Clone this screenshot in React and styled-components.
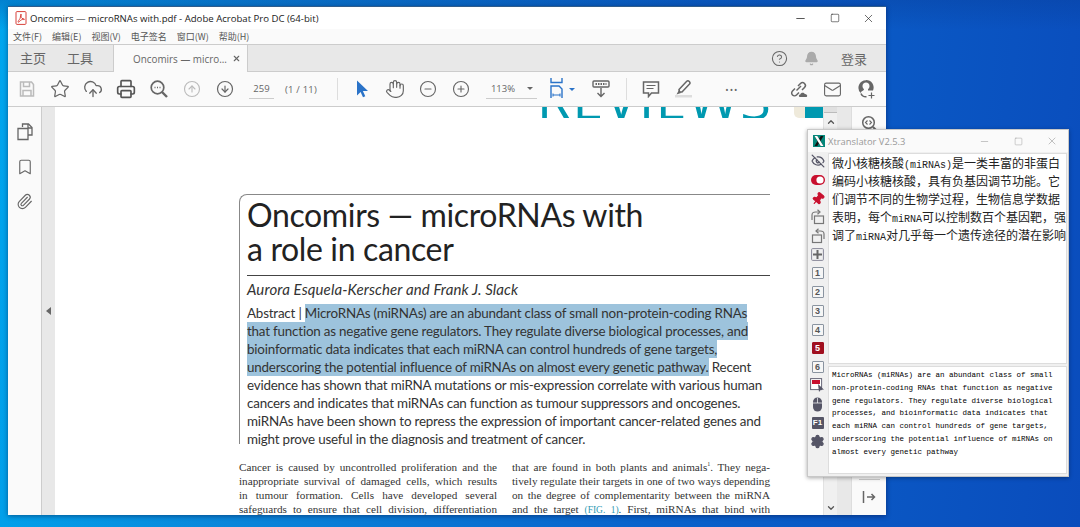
import React from 'react';
import styled, { createGlobalStyle } from 'styled-components';
import {
  Star, CloudUpload, Printer, CircleArrowUp, CircleArrowDown, Hand, CircleMinus, CirclePlus,
  Bookmark, Paperclip, CircleHelp, Bell, Mail, Minus, Square, X, EyeOff, Pin, Settings, ChevronUp, ChevronDown,
} from 'lucide-react';

const GlobalStyle = createGlobalStyle`
  html, body {
    margin: 0;
    padding: 0;
    width: 1080px;
    height: 527px;
    overflow: hidden;
  }
  * { box-sizing: border-box; }
`;

const UI_FONT = `"Open Sans", "Noto Sans CJK SC", sans-serif`;
const CJK_FONT = `"Noto Sans CJK SC", "Noto Sans", sans-serif`;
const PAPER_FONT = `Lato, "Open Sans", sans-serif`;

const menus = ['文件(F)', '编辑(E)', '视图(V)', '电子签名', '窗口(W)', '帮助(H)'];

const abstractLines = [
  { before: 'Abstract | ', mark: 'MicroRNAs (miRNAs) are an abundant class of small non-protein-coding RNAs' },
  { mark: 'that function as negative gene regulators. They regulate diverse biological processes, and' },
  { mark: 'bioinformatic data indicates that each miRNA can control hundreds of gene targets,' },
  { mark: 'underscoring the potential influence of miRNAs on almost every genetic pathway.', after: ' Recent' },
  { after: 'evidence has shown that miRNA mutations or mis-expression correlate with various human' },
  { after: 'cancers and indicates that miRNAs can function as tumour suppressors and oncogenes.' },
  { after: 'miRNAs have been shown to repress the expression of important cancer-related genes and' },
  { after: 'might prove useful in the diagnosis and treatment of cancer.' },
];

const leftColumn = [
  'Cancer is caused by uncontrolled proliferation and the',
  'inappropriate survival of damaged cells, which results',
  'in tumour formation. Cells have developed several',
  'safeguards to ensure that cell division, differentiation',
];

const zhLines = [
  ['微小核糖核酸', '(miRNAs)', '是一类丰富的非蛋白'],
  ['编码小核糖核酸，具有负基因调节功能。它'],
  ['们调节不同的生物学过程，生物信息学数据'],
  ['表明，每个', 'miRNA', '可以控制数百个基因靶，强'],
  ['调了', 'miRNA', '对几乎每一个遗传途径的潜在影响'],
];

const enLines = [
  'MicroRNAs (miRNAs) are an abundant class of small',
  'non-protein-coding RNAs that function as negative',
  'gene regulators. They regulate diverse biological',
  'processes, and bioinformatic data indicates that',
  'each miRNA can control hundreds of gene targets,',
  'underscoring the potential influence of miRNAs on',
  'almost every genetic pathway',
];

function PdfIcon() {
  return (
    <svg width="12" height="14" viewBox="0 0 12 14">
      <path d="M1 1.5C1 1 1.4.6 2 .6h8c.6 0 1 .4 1 .9v11c0 .5-.4.9-1 .9H2c-.6 0-1-.4-1-.9z" fill="#fff" stroke="#d8413a" />
      <path d="M6 3c-.7 0-.2 3-1 4.5S2.5 10.8 3.3 11.2 5 9.5 6.5 8.8s3 .2 3-.5S6.8 8 6.3 6.5 6.6 3 6 3z" fill="none" stroke="#d8413a" strokeWidth="1" />
    </svg>
  );
}

function SaveIcon() {
  return (
    <svg width="18" height="18" viewBox="0 0 18 18" fill="none" stroke="#bbb" strokeWidth="1.5">
      <path d="M2.5 2h11l2 2.5V16h-13z" />
      <path d="M5.5 2v4.500h6V2M5 16v-5.500h8V16" />
    </svg>
  );
}

function FindIcon() {
  return (
    <svg width="20" height="20" viewBox="0 0 20 20" fill="none" stroke="#666" strokeWidth="1.7">
      <circle cx="8.5" cy="8.5" r="6.3" />
      <path d="M13 13l5 5" strokeWidth="2.4" />
      <path d="M5.5 8.5h1M8 8.5h1M10.5 8.5h1" strokeWidth="1.4" />
    </svg>
  );
}

function ArrowCursor() {
  return (
    <svg width="14" height="18" viewBox="0 0 14 18">
      <path d="M2 .5v15l3.6-3.5 2.4 5.300 2.300-1-2.400-5.200H13z" fill="#2a73c8" />
    </svg>
  );
}

function FitIcon() {
  return (
    <svg width="20" height="22" viewBox="0 0 20 22" fill="none" stroke="#2a73c8" strokeWidth="1.4">
      <path d="M2 0v4.500h11V0" />
      <path d="M2 20V8h8l3 3v9" />
      <path d="M4 17h7M4 15.500v3M11 15.500v3" strokeWidth="1.1" />
    </svg>
  );
}

function ReadIcon() {
  return (
    <svg width="18" height="18" viewBox="0 0 18 18" fill="none" stroke="#666" strokeWidth="1.4">
      <rect x="1" y="1" width="16" height="6" rx="1" />
      <path d="M3.5 4h11" strokeWidth="2" strokeDasharray="1.5 1" />
      <path d="M9 8v8.500M5.500 13L9 16.500 12.500 13" />
    </svg>
  );
}

function CommentIcon() {
  return (
    <svg width="18" height="18" viewBox="0 0 18 18" fill="none" stroke="#666" strokeWidth="1.5">
      <path d="M1.5 2h15v11h-7l-3 3.500V13h-5z" />
      <path d="M4.5 5.500h9M4.500 8.500h7" strokeWidth="1.2" />
    </svg>
  );
}

function MarkerIcon() {
  return (
    <svg width="20" height="18" viewBox="0 0 20 18" fill="none">
      <path d="M5 9.500L12.500 1.500c.8-.8 2-.8 2.800 0 .8.800.8 2 0 2.800L8 12H5.500z" stroke="#666" strokeWidth="1.5" />
      <path d="M5 10l-2.500 4.500L7 13z" fill="#666" />
      <rect x="1" y="15" width="17" height="2.5" fill="#ddd" />
    </svg>
  );
}

function ShareLinkIcon() {
  return (
    <svg width="20" height="18" viewBox="0 0 20 18" fill="none" stroke="#666" strokeWidth="1.5">
      <path d="M5 8.500L2.500 11a2.800 2.800 0 0 0 4 4L9 12.500" />
      <path d="M8 6l2.500-2.500a2.800 2.800 0 0 1 4 4L12 10" />
      <path d="M6.500 10.500L11 6" />
      <path d="M10 17c-1.500 0-1.500-2.500.3-2.500.3-2 3.700-2.500 4.500-.5 2-.5 3.800 3 1 3z" fill="#666" stroke="none" />
    </svg>
  );
}

function AccountIcon() {
  return (
    <svg width="20" height="20" viewBox="0 0 20 20" fill="none" stroke="#666">
      <path d="M10 1.200a7.500 7.500 0 0 0-5.300 12.800l.8-1.500c1-.8 2.500-1 2.500-2.200-1-1-1.500-2-1.500-3.300 0-2 1.500-3.500 3.500-3.500s3.500 1.500 3.500 3.500c0 1.300-.5 2.300-1.500 3.300v1.200H17a7.500 7.500 0 0 0-7-10.500z" fill="#666" stroke="none" />
      <path d="M5 14.500C6 17 8 18 10.500 17.800" strokeWidth="1.5" />
      <path d="M15.500 13.500v6M12.500 16.500h6" strokeWidth="1.2" />
    </svg>
  );
}

function PagesIcon() {
  return (
    <svg width="16" height="18" viewBox="0 0 16 18" fill="none" stroke="#666" strokeWidth="1.3">
      <path d="M5.500 4V1h6l3.500 3.500V12H11" />
      <path d="M1 5.500h10V16.500H1z" />
      <path d="M11 1v4h4" />
    </svg>
  );
}

function ZoomFitIcon() {
  return (
    <svg width="17" height="17" viewBox="0 0 17 17" fill="none" stroke="#666" strokeWidth="1.5">
      <circle cx="7.5" cy="7.5" r="5.8" />
      <path d="M12 12l4 4" strokeWidth="2" />
      <path d="M6.500 5.500l-2 2 2 2M8.500 5.500l2 2-2 2" strokeWidth="1.1" />
    </svg>
  );
}

function CollapseIcon() {
  return (
    <svg width="14" height="14" viewBox="0 0 14 14" fill="none" stroke="#666" strokeWidth="1.5">
      <path d="M1.500 1v12" />
      <path d="M5 7h7.500M9.500 4l3 3-3 3" />
    </svg>
  );
}

function XLogo() {
  return (
    <svg width="12" height="12" viewBox="0 0 12 12">
      <rect width="12" height="12" fill="#05877a" />
      <path d="M1.500 1h2.800L6 4 7.700 1h2.800L7.500 6l3 5H7.700L6 8l-1.700 3H1.500l3-5z" fill="#111" />
      <path d="M1.500 1h2.800l6.200 10H7.700z" fill="#fff" />
    </svg>
  );
}

function ToggleIcon() {
  return (
    <svg width="14" height="10" viewBox="0 0 14 10">
      <rect width="14" height="10" rx="5" fill="#c8102e" />
      <circle cx="9" cy="5" r="3.6" fill="#fff" />
    </svg>
  );
}

function RotateBox({ flip }) {
  return (
    <svg width="14" height="16" viewBox="0 0 14 16" fill="none" stroke="#777" strokeWidth="1.2" style={flip ? { transform: 'scaleX(-1)' } : undefined}>
      <rect x="3.5" y="7" width="9" height="7.5" />
      <path d="M1 11V6c0-2 1.500-3 3.500-3H8" />
      <path d="M6.500 .8L9 3 6.500 5.200" />
    </svg>
  );
}

function PlusBox() {
  return (
    <svg width="13" height="13" viewBox="0 0 13 13" fill="none" stroke="#666">
      <rect x=".6" y=".6" width="11.8" height="11.8" rx="1" stroke="#889" />
      <path d="M6.500 2v9M2 6.500h9" strokeWidth="2" />
    </svg>
  );
}

function PickIcon() {
  return (
    <svg width="15" height="15" viewBox="0 0 15 15">
      <rect x=".6" y=".6" width="11" height="11" fill="#fff" stroke="#667" />
      <rect x="2" y="2" width="8" height="4" fill="#c8102e" />
      <path d="M8 6l1 8 2-2.500 3 .2z" fill="#556" />
    </svg>
  );
}

function MouseIcon() {
  return (
    <svg width="11" height="15" viewBox="0 0 11 15">
      <path d="M1 5a4.500 4.500 0 0 1 9 0v5a4.500 4.500 0 0 1-9 0z" fill="#556" />
      <path d="M1 6h9M5.500 1v5" stroke="#fff" strokeWidth=".7" />
    </svg>
  );
}

export default function App() {
  const rightColumn = [
    <>that are found in both plants and animals<Sup>1</Sup>. They nega-</>,
    'tively regulate their targets in one of two ways depending',
    'on the degree of complementarity between the miRNA',
    <>and the target <FigLink>(FIG. 1)</FigLink>. First, miRNAs that bind with</>,
  ];

  const sideTools = [
    <EyeOff size={14} strokeWidth={2.2} color="#556" />,
    <ToggleIcon />,
    <PinMark><Pin size={14} fill="#c8102e" color="#c8102e" /></PinMark>,
    <RotateBox />,
    <RotateBox flip />,
    <PlusBox />,
    ...[1, 2, 3, 4, 5, 6].map((n) => <NumKey $active={n === 5}>{n}</NumKey>),
    <PickIcon />,
    <MouseIcon />,
    <F1Key>F1</F1Key>,
    <Settings size={15} fill="#556" color="#556" strokeWidth={2} />,
  ];

  return (
    <Desktop>
      <GlobalStyle />
      <AcrobatWindow>
        <TitleBar>
          <PdfIcon />
          <TitleText>Oncomirs — microRNAs with.pdf - Adobe Acrobat Pro DC (64-bit)</TitleText>
          <WindowControls>
            <Minus size={13} strokeWidth={1.4} />
            <Square size={10} strokeWidth={1.4} />
            <X size={13} strokeWidth={1.2} />
          </WindowControls>
        </TitleBar>

        <MenuBar>
          {menus.map((item) => <MenuItem key={item}>{item}</MenuItem>)}
        </MenuBar>

        <TabBar>
          <NavTab>主页</NavTab>
          <NavTab>工具</NavTab>
          <DocTab>
            <span>Oncomirs — micro...</span>
            <X size={9} strokeWidth={3} color="#666" />
          </DocTab>
          <TabRight>
            <CircleHelp size={17} strokeWidth={1.5} color="#666" />
            <Bell size={15} fill="#aaa" color="#aaa" />
            <Login>登录</Login>
          </TabRight>
        </TabBar>

        <ToolBar>
          <Tool><SaveIcon /></Tool>
          <Tool><Star size={20} strokeWidth={1.5} color="#666" /></Tool>
          <Tool><CloudUpload size={20} strokeWidth={1.6} color="#666" /></Tool>
          <Tool><Printer size={20} strokeWidth={2} color="#555" /></Tool>
          <Tool><FindIcon /></Tool>
          <Tool><CircleArrowUp size={18} strokeWidth={1.5} color="#bbb" /></Tool>
          <Tool><CircleArrowDown size={18} strokeWidth={1.6} color="#666" /></Tool>
          <PageInput>259</PageInput>
          <PageCount>(1 / 11)</PageCount>
          <ToolDivider $left={20} />
          <Tool $left={8}><ArrowCursor /></Tool>
          <Tool><Hand size={20} strokeWidth={1.4} color="#666" /></Tool>
          <Tool><CircleMinus size={18} strokeWidth={1.5} color="#666" /></Tool>
          <Tool><CirclePlus size={18} strokeWidth={1.5} color="#666" /></Tool>
          <ZoomSelect>113%<Caret /></ZoomSelect>
          <Tool $left={8} $width={28}><FitIcon /></Tool>
          <BlueCaret />
          <Tool $left={10}><ReadIcon /></Tool>
          <ToolDivider $left={8} />
          <Tool $left={8}><CommentIcon /></Tool>
          <Tool><MarkerIcon /></Tool>
          <MoreDots>•••</MoreDots>
          <ToolRight>
            <Tool><ShareLinkIcon /></Tool>
            <Tool><Mail size={19} strokeWidth={1.4} color="#666" /></Tool>
            <Tool><AccountIcon /></Tool>
          </ToolRight>
        </ToolBar>

        <Workspace>
          <LeftRail>
            <PagesIcon />
            <Bookmark size={18} strokeWidth={1.5} color="#666" />
            <Paperclip size={17} strokeWidth={1.6} color="#666" />
          </LeftRail>
          <CollapseStrip><LeftCaret /></CollapseStrip>

          <Doc>
            <ReviewsBand>
              <Reviews>REVIEWS</Reviews>
              <BrandChip />
              <BrandBlock />
            </ReviewsBand>

            <Article>
              <Headline>
                <Title>Oncomirs — microRNAs with<br />a role in cancer</Title>
                <Rule />
                <Authors>Aurora Esquela-Kerscher and Frank J. Slack</Authors>
                <Abstract>
                  {abstractLines.map((line, i) => (
                    <AbstractLine key={i}>
                      {line.before}
                      {line.mark && <Mark>{line.mark}</Mark>}
                      {line.after}
                    </AbstractLine>
                  ))}
                </Abstract>
              </Headline>
              <Columns>
                <div>
                  {leftColumn.map((line, i) => <ColumnLine key={i}>{line}</ColumnLine>)}
                </div>
                <div>
                  {rightColumn.map((line, i) => <ColumnLine key={i}>{line}</ColumnLine>)}
                </div>
              </Columns>
            </Article>
          </Doc>

          <ScrollBar>
            <ScrollThumb />
            <ScrollButton><ChevronUp size={10} strokeWidth={3} color="#555" /></ScrollButton>
            <ScrollButton $bottom><ChevronDown size={10} strokeWidth={3} color="#555" /></ScrollButton>
          </ScrollBar>
          <Gutter />
          <RightRail>
            <ZoomFitIcon />
            <RailFoot>
              <RailRule />
              <CollapseIcon />
            </RailFoot>
          </RightRail>
        </Workspace>
      </AcrobatWindow>

      <Translator>
        <TranslatorTitle>
          <XLogo />
          <TranslatorName>Xtranslator V2.5.3</TranslatorName>
          <TranslatorControls>
            <Minus size={11} strokeWidth={1.2} />
            <Square size={9} strokeWidth={1.2} />
            <X size={12} strokeWidth={1.2} />
          </TranslatorControls>
        </TranslatorTitle>
        <TranslatorBody>
          <SideTools>
            {sideTools.map((tool, i) => <SideSlot key={i}>{tool}</SideSlot>)}
          </SideTools>
          <Panes>
            <ZhPane>
              {zhLines.map((line, i) => (
                <ZhLine key={i}>
                  {line.map((part, j) => (j % 2 === 1 ? <ZhLatin key={j}>{part}</ZhLatin> : part))}
                </ZhLine>
              ))}
            </ZhPane>
            <EnPane>
              {enLines.map((line) => <EnLine key={line}>{line}</EnLine>)}
            </EnPane>
          </Panes>
        </TranslatorBody>
      </Translator>
    </Desktop>
  );
}

const Desktop = styled.div`
  position: relative;
  width: 1080px;
  height: 527px;
  overflow: hidden;
  padding: 6px 0 0 8px;
  background:
    linear-gradient(180deg, rgba(8, 60, 150, 0.35) 0, rgba(8, 60, 150, 0) 30px),
    linear-gradient(96deg, #00a6ee 0%, #0a86da 25%, #0a62cb 62%, #0a4cbc 100%);
`;

const AcrobatWindow = styled.div`
  width: 878px;
  height: 509px;
  display: flex;
  flex-direction: column;
  background: #fff;
  border-top: 1px solid #2f5d8c;
  box-shadow: 0 1px 5px rgba(0, 0, 40, 0.45);
  overflow: hidden;
`;

const TitleBar = styled.div`
  height: 22px;
  flex: none;
  display: flex;
  align-items: center;
  padding-left: 7px;
  gap: 3px;
  background: #fff;
`;

const TitleText = styled.div`
  font: 9.6px ${UI_FONT};
  color: #222;
  white-space: nowrap;
`;

const WindowControls = styled.div`
  margin-left: auto;
  width: 81px;
  margin-right: 11px;
  display: flex;
  justify-content: space-between;
  align-items: center;
  color: #222;
`;

const MenuBar = styled.div`
  height: 15px;
  flex: none;
  display: flex;
  align-items: center;
  gap: 10px;
  padding-left: 5px;
  background: #fafafa;
`;

const MenuItem = styled.span`
  font: 9px ${CJK_FONT};
  color: #555;
  white-space: nowrap;
`;

const TabBar = styled.div`
  height: 28px;
  flex: none;
  display: flex;
  align-items: stretch;
  padding-left: 12px;
  background: #e8e8e8;
  border-top: 1px solid #ccc;
  border-bottom: 1px solid #ccc;
`;

const NavTab = styled.div`
  font: 13px/26px ${CJK_FONT};
  color: #666;
  margin-right: 21px;
`;

const DocTab = styled.div`
  width: 135px;
  margin: 0 0 -1px -1px;
  padding: 0 6px 0 19px;
  display: flex;
  align-items: center;
  justify-content: space-between;
  background: #fafafa;
  border-left: 1px solid #ccc;
  border-right: 1px solid #ccc;
  font: 9.9px ${UI_FONT};
  color: #666;
  white-space: nowrap;
`;

const TabRight = styled.div`
  margin-left: auto;
  display: flex;
  align-items: center;
  padding-right: 19px;
  gap: 16px;
`;

const Login = styled.span`
  font: 13px ${CJK_FONT};
  color: #666;
  margin-left: 6px;
`;

const ToolBar = styled.div`
  height: 35px;
  flex: none;
  display: flex;
  align-items: center;
  padding-left: 2px;
  background: #fafafa;
  border-bottom: 1px solid #ccc;
`;

const Tool = styled.div`
  width: ${(p) => p.$width || 33}px;
  margin-left: ${(p) => p.$left || 0}px;
  height: 24px;
  flex: none;
  display: flex;
  align-items: center;
  justify-content: center;
`;

const PageInput = styled.div`
  width: 25px;
  height: 20px;
  margin-left: 8px;
  text-align: center;
  border-bottom: 1px solid #ccc;
  font: 9.5px/20px ${UI_FONT};
  color: #666;
`;

const PageCount = styled.div`
  margin-left: 11px;
  font: 9.5px ${UI_FONT};
  letter-spacing: 0.2px;
  color: #666;
  white-space: nowrap;
`;

const ToolDivider = styled.div`
  width: 1px;
  height: 22px;
  margin-left: ${(p) => p.$left}px;
  background: #ddd;
`;

const ZoomSelect = styled.div`
  width: 51px;
  height: 20px;
  margin-left: 8px;
  padding-left: 5px;
  display: flex;
  align-items: center;
  justify-content: space-between;
  border-bottom: 1px solid #ccc;
  font: 9.5px ${UI_FONT};
  color: #666;
`;

const Caret = styled.i`
  width: 0;
  height: 0;
  margin-right: 4px;
  border: 3px solid transparent;
  border-top: 3px solid #666;
  border-bottom: 0;
`;

const BlueCaret = styled(Caret)`
  margin: 0 0 0 -4px;
  border-top-color: #2a73c8;
`;

const MoreDots = styled.div`
  width: 62px;
  text-align: center;
  font: 9px ${UI_FONT};
  letter-spacing: 1px;
  color: #666;
`;

const ToolRight = styled.div`
  margin-left: auto;
  margin-right: 4px;
  display: flex;
`;

const Workspace = styled.div`
  flex: 1;
  min-height: 0;
  display: flex;
`;

const LeftRail = styled.div`
  width: 34px;
  flex: none;
  padding-top: 16px;
  display: flex;
  flex-direction: column;
  align-items: center;
  gap: 17px;
  background: #fafafa;
  border-right: 1px solid #ccc;
`;

const CollapseStrip = styled.div`
  width: 13px;
  flex: none;
  display: flex;
  align-items: center;
  justify-content: center;
  background: #e8e8e8;
`;

const LeftCaret = styled.i`
  width: 0;
  height: 0;
  border: 4px solid transparent;
  border-right: 5px solid #666;
  border-left: 0;
`;

const Doc = styled.div`
  width: 768px;
  flex: none;
  overflow: hidden;
  background: #fff;
`;

const ReviewsBand = styled.div`
  height: 11px;
  display: flex;
  align-items: flex-end;
  justify-content: flex-end;
  overflow: hidden;
`;

const Reviews = styled.div`
  font: 400 56px/40px "Open Sans", sans-serif;
  letter-spacing: 1px;
  color: #0099b0;
  margin-right: 22px;
  white-space: nowrap;
`;

const BrandChip = styled.div`
  width: 11px;
  height: 11px;
  background: #efeadb;
  border-bottom-left-radius: 5px;
`;

const BrandBlock = styled.div`
  width: 18px;
  height: 11px;
  background: #0099b0;
`;

const Article = styled.div`
  width: 531px;
  margin: 76px 0 0 184px;
`;

const Headline = styled.div`
  padding: 3px 0 0 7px;
  height: 250px;
  border-top: 1px solid #888;
  border-left: 1px solid #888;
  border-top-left-radius: 8px;
`;

const Title = styled.h1`
  margin: 0;
  font: 400 32px/34px ${PAPER_FONT};
  letter-spacing: -0.36px;
  color: #222;
  white-space: nowrap;
`;

const Rule = styled.div`
  height: 1px;
  margin-top: 9px;
  background: #444;
`;

const Authors = styled.div`
  margin-top: 4px;
  font: italic 400 15px/18px ${PAPER_FONT};
  letter-spacing: 0.12px;
  color: #333;
  white-space: nowrap;
`;

const Abstract = styled.div`
  margin-top: 6px;
`;

const AbstractLine = styled.div`
  height: 18px;
  font: 400 13.4px/18px ${PAPER_FONT};
  letter-spacing: -0.2px;
  color: #333;
  white-space: pre;
`;

const Mark = styled.span`
  background: #9dc3dc;
  display: inline-block;
  height: 18px;
`;

const Columns = styled.div`
  margin-top: 16px;
  display: grid;
  grid-template-columns: 258px 258px;
  column-gap: 15px;
`;

const ColumnLine = styled.div`
  height: 14px;
  font: 11.2px/14px "Liberation Serif", serif;
  color: #333;
  white-space: nowrap;
  text-align: justify;
  text-align-last: justify;
`;

const Sup = styled.sup`
  font-size: 6px;
  line-height: 0;
`;

const FigLink = styled.span`
  color: #2f9bb5;
  font-size: 9.5px;
`;

const ScrollBar = styled.div`
  position: relative;
  width: 14px;
  flex: none;
  background: #f0f0f0;
  border-left: 1px solid #e2e2e2;
`;

const ScrollThumb = styled.div`
  height: 6px;
  background: #e0e0e0;
  border-bottom: 1px solid #bbb;
`;

const ScrollButton = styled.div`
  position: absolute;
  left: 1px;
  ${(p) => (p.$bottom ? 'bottom: 2px;' : 'top: 10px;')}
  width: 12px;
  height: 10px;
  display: flex;
  align-items: center;
  justify-content: center;
`;

const Gutter = styled.div`
  width: 14px;
  flex: none;
  background: #e8e8e8;
`;

const RightRail = styled.div`
  flex: 1;
  padding: 8px 0 11px;
  display: flex;
  flex-direction: column;
  align-items: center;
  justify-content: space-between;
  background: #fafafa;
  border-left: 1px solid #ddd;
`;

const RailFoot = styled.div`
  display: flex;
  flex-direction: column;
  align-items: center;
  gap: 10px;
`;

const RailRule = styled.div`
  width: 21px;
  height: 1px;
  background: #ccc;
`;

const Translator = styled.div`
  position: absolute;
  left: 807px;
  top: 129px;
  width: 262px;
  height: 348px;
  display: flex;
  flex-direction: column;
  background: #f0f0f0;
  border: 1px solid #c8c8c8;
  box-shadow: 0 1px 4px rgba(0, 0, 0, 0.35);
`;

const TranslatorTitle = styled.div`
  height: 22px;
  flex: none;
  display: flex;
  align-items: center;
  padding-left: 5px;
  gap: 3px;
  background: #fafafa;
`;

const TranslatorName = styled.div`
  font: 9.4px ${UI_FONT};
  color: #999;
  white-space: nowrap;
`;

const TranslatorControls = styled.div`
  margin-left: auto;
  margin-right: 10px;
  width: 79px;
  display: flex;
  justify-content: space-between;
  align-items: center;
  color: #999;
`;

const TranslatorBody = styled.div`
  flex: 1;
  min-height: 0;
  display: flex;
`;

const SideTools = styled.div`
  width: 19px;
  flex: none;
  display: flex;
  flex-direction: column;
`;

const SideSlot = styled.div`
  height: 18.7px;
  flex: none;
  display: flex;
  align-items: center;
  justify-content: center;
`;

const PinMark = styled.div`
  display: flex;
  transform: rotate(40deg);
`;

const NumKey = styled.div`
  width: 12px;
  height: 12px;
  border: 1px solid ${(p) => (p.$active ? '#a00f1f' : '#8a94a0')};
  border-radius: 1px;
  background: ${(p) => (p.$active ? '#a00f1f' : '#f6f6f6')};
  color: ${(p) => (p.$active ? '#fff' : '#555')};
  font: 700 9px/10px "Liberation Sans", sans-serif;
  text-align: center;
`;

const F1Key = styled.div`
  width: 12px;
  height: 12px;
  background: #556;
  color: #fff;
  border-radius: 1px;
  font: 700 8px/12px "Liberation Sans", sans-serif;
  text-align: center;
`;

const Panes = styled.div`
  flex: 1;
  min-width: 0;
  padding: 1px 1px 2px 1px;
  display: flex;
  flex-direction: column;
  gap: 2px;
`;

const ZhPane = styled.div`
  height: 211px;
  flex: none;
  padding: 0 0 0 3px;
  background: #fff;
  border: 1px solid #ddd;
`;

const ZhLine = styled.div`
  height: 18px;
  font: 12px/18px "Noto Sans CJK SC", sans-serif;
  color: #222;
  white-space: nowrap;
`;

const ZhLatin = styled.span`
  font: 10px "Liberation Mono", monospace;
`;

const EnPane = styled.div`
  flex: 1;
  padding: 2px 0 0 3px;
  background: #fff;
  border: 1px solid #ddd;
`;

const EnLine = styled.div`
  height: 12.8px;
  font: 7.5px/12.8px "Liberation Mono", monospace;
  color: #000;
  white-space: nowrap;
`;
